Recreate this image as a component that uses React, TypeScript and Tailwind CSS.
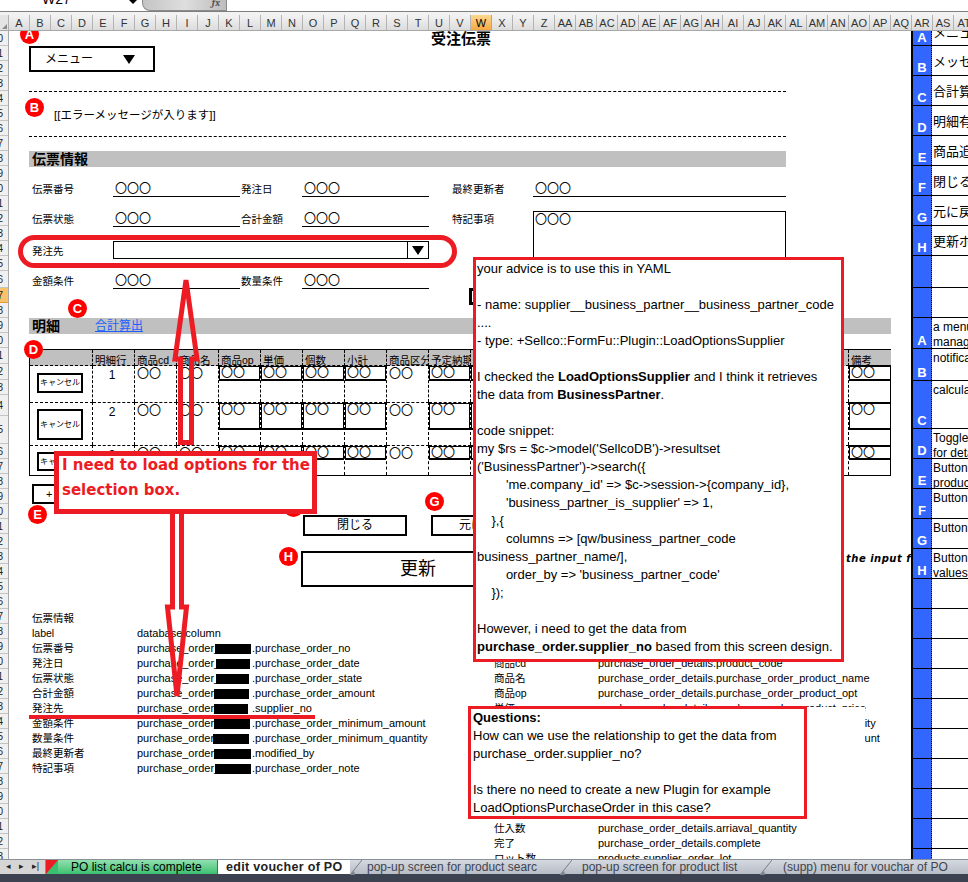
import React from "react";

const COLS = ["A","B","C","D","E","F","G","H","I","J","K","L","M","N","O","P","Q","R","S","T","U","V","W","X","Y","Z","AA","AB","AC","AD","AE","AF","AG","AH","AI","AJ","AK","AL","AM","AN","AO","AP","AQ","AR","AS","AT"];

const GUTTER = [15,15,15,15,15,15,15,15,15,15,15,15,15,15,15,15,17,15,15,15,15,16,16,15,21,28,15,15,15,15,15,15,15,15,15,15,15,15,15,15,15,15,15,15,15,15,15,15,15,15,15,15,15,15,15,15];

const PANEL: { h: number; l?: string; t?: string[]; top?: boolean }[] = [
  { h: 15, l: "A", t: ["メニュー"], top: true },
  { h: 30, l: "B", t: ["メッセージ"] },
  { h: 30, l: "C", t: ["合計算出"] },
  { h: 30, l: "D", t: ["明細有無"] },
  { h: 30, l: "E", t: ["商品追加"] },
  { h: 30, l: "F", t: ["閉じるボタン"] },
  { h: 30, l: "G", t: ["元に戻す"] },
  { h: 30, l: "H", t: ["更新ボタン"] },
  { h: 32 },
  { h: 30 },
  { h: 31, l: "A", t: ["a menu", "management"] },
  { h: 32, l: "B", t: ["notification"] },
  { h: 48, l: "C", t: ["calculate"] },
  { h: 30, l: "D", t: ["Toggle", "for details"] },
  { h: 30, l: "E", t: ["Button", "product"] },
  { h: 30, l: "F", t: ["Button"] },
  { h: 30, l: "G", t: ["Button"] },
  { h: 30, l: "H", t: ["Button", "values"] },
  { h: 30 },{ h: 30 },{ h: 30 },{ h: 30 },{ h: 30 },{ h: 30 },{ h: 30 },{ h: 30 },{ h: 30 },{ h: 30 },
];

const HEADERS = ["","明細行","商品cd","商品名","商品op","単価","個数","小計","商品区分","予定納期","仕入先","仕入数","完了","ロット数","入荷日","入荷数","金額","税区分","摘要","備考"];
const BOXED = [4,5,6,7,9,10,11,12,13,14,15,16,17,19];
const TROWS = [
  { no: "1", box: "h-[16px]", btn: "h-[20px] mt-[7px]" },
  { no: "2", box: "h-[28px]", btn: "h-[31px] mt-[6px]" },
  { no: "3", box: "h-[15px]", btn: "h-[19px] mt-[6px]" },
];

const LEFT: [string, string, string?, number?, number?][] = [
  ["伝票情報",""],
  ["label","database column"],
  ["伝票番号","purchase_order_",".purchase_order_no",215,36],
  ["発注日","purchase_order_",".purchase_order_date",216,34],
  ["伝票状態","purchase_order_",".purchase_order_state",216,33],
  ["合計金額","purchase_order_",".purchase_order_amount",214,35],
  ["発注先","purchase_order_",".supplier_no",214,34],
  ["金額条件","purchase_order_",".purchase_order_minimum_amount",214,36],
  ["数量条件","purchase_order_",".purchase_order_minimum_quantity",213,36],
  ["最終更新者","purchase_order_",".modified_by",214,37],
  ["特記事項","purchase_order_",".purchase_order_note",215,36],
];

const RIGHT = [
  ["明細",""],["label","database column"],["明細行","purchase_order_details.line_no"],
  ["商品cd","purchase_order_details.product_code"],
  ["商品名","purchase_order_details.purchase_order_product_name"],
  ["商品op","purchase_order_details.purchase_order_product_opt"],
  ["単価","purchase_order_details.purchase_order_product_price"],
  ["個数","purchase_order_details.purchase_order_supply_quantity"],
  ["小計","purchase_order_details.purchase_order_ordered_amount"],
  ["",""],["",""],["",""],["",""],["",""],
  ["仕入数","purchase_order_details.arriaval_quantity"],
  ["完了","purchase_order_details.complete"],
  ["ロット数","products.supplier_order_lot"],
];

function Badge({ l, cls }: { l: string; cls: string }) {
  return (
    <div className={`absolute w-[19px] h-[19px] rounded-full bg-[#ff0000] text-white font-bold text-[13px] leading-[19px] text-center ${cls}`}>{l}</div>
  );
}

function Tri() {
  return <span className="block w-0 h-0 border-l-[6px] border-r-[6px] border-t-[9px] border-l-transparent border-r-transparent border-t-black" />;
}

function Label({ text, pad = "pl-[3px]" }: { text: string; pad?: string }) {
  return <div className={`${pad} text-[10.5px] leading-[17px] whitespace-nowrap`}>{text}</div>;
}

function Value({ text }: { text: string }) {
  return <div className="border-b border-black pl-[2px] pt-[1px] text-[12px] leading-[15px] h-[16px]">{text}</div>;
}

function Tab({ w, children, cls = "" }: { w: number; children: React.ReactNode; cls?: string }) {
  return (
    <div style={{ width: w }} className={`shrink-0 h-full flex items-center whitespace-nowrap ${cls}`}>{children}</div>
  );
}

function Slash() {
  return (
    <svg width="12" height="15" className="shrink-0">
      <path d="M0 15 L12 0" stroke="#7a7f88" fill="none" />
      <path d="M0 15 L4 11 L5 15 Z" fill="#7a7f88" />
    </svg>
  );
}

export default function App() {
  return (
    <div className="relative w-[968px] h-[882px] overflow-hidden bg-white flex flex-col text-black [font-family:'Liberation_Sans','Noto_Sans_CJK_JP',sans-serif]">
      {/* formula bar */}
      <div className="h-[12px] shrink-0 flex border-b border-[#7f7f7f] relative overflow-hidden">
        <div className="w-[142px] relative">
          <span className="absolute left-[42px] -top-[9px] text-[14px] leading-[16px]">W27</span>
          <span className="absolute left-[129px] top-0 w-0 h-0 border-l-[4px] border-r-[4px] border-t-[4px] border-l-transparent border-r-transparent border-t-black" />
        </div>
        <div className="w-[85px] h-[11px] bg-gradient-to-r from-[#c4c4c4] via-[#dedede] to-[#bdbdbd] border-x border-b border-[#8a8a8a] rounded-bl-[8px] flex justify-end items-start pr-[6px]">
          <span className="text-[10px] leading-[6px] italic font-bold text-[#555] font-serif">fx</span>
        </div>
      </div>
      <div className="h-[3px] shrink-0 bg-[#f2f2f2]" />
      {/* column headers */}
      <div className="h-[16px] shrink-0 flex overflow-hidden border-b border-[#a8a8a8]">
        <div className="w-[9px] shrink-0 bg-[#e4e4e4] border-r border-[#b0b0b0] relative">
          <span className="absolute right-[1px] bottom-[1px] w-0 h-0 border-l-[5px] border-b-[5px] border-l-transparent border-b-[#8a8a8a]" />
        </div>
        {COLS.map((c) => (
          <div key={c} className={`w-[21px] shrink-0 text-center text-[11px] leading-[16px] border-r ${c === "W" ? "bg-gradient-to-b from-[#fbd98c] to-[#f5a843] border-[#e59c3a]" : "bg-gradient-to-b from-[#f3f3f3] to-[#dcdcdc] border-[#b4b4b4] text-[#333]"}`}>{c}</div>
        ))}
      </div>
      {/* main */}
      <div className="flex-1 min-h-0 flex overflow-hidden">
        <div className="w-[9px] shrink-0 border-r border-[#a8a8a8] overflow-hidden">
          {GUTTER.map((h, i) => (
            <div key={i} style={{ height: h }} className={`flex justify-end items-center border-b text-[10px] overflow-hidden ${i === 17 ? "bg-[#fbc26a] border-[#e59c3a]" : "bg-[#f0f0f0] border-[#c4c4c4]"}`}>
              <span className="mr-[5px] whitespace-nowrap text-[#222]">{i + 10}</span>
            </div>
          ))}
        </div>

        {/* sheet */}
        <div className="relative w-[902px] shrink-0 overflow-hidden pl-[20px]">
          <div className="h-[15px] pl-[402px] text-[15px] font-bold leading-[15px] whitespace-nowrap">受注伝票</div>
          <div className="w-[126px] h-[26px] border-2 border-black flex items-center pl-[14px]">
            <span className="text-[12px] w-[78px]">メニュー</span>
            <Tri />
          </div>
          <div className="w-[757px] mt-[19px] border-t border-dashed border-black" />
          <div className="h-[44px] pl-[25px] pt-[14px] text-[11.5px] leading-[18px]">[[エラーメッセージが入ります]]</div>
          <div className="w-[757px] border-t border-dashed border-black" />

          <div className="w-[757px] h-[16px] mt-[14px] bg-[#c0c0c0] pl-[3px] text-[14px] font-bold leading-[16px]">伝票情報</div>

          <div className="w-[757px] mt-[14px] grid grid-cols-[84px_127px_62px_127px_23px_81px_253px] grid-rows-[16px_16px_18px_16px] gap-y-[14px]">
            <Label text="伝票番号" />
            <Value text="〇〇〇" />
            <Label text="発注日" pad="pl-[1px]" />
            <Value text="〇〇〇" />
            <div />
            <Label text="最終更新者" pad="" />
            <Value text="〇〇〇" />

            <Label text="伝票状態" />
            <Value text="〇〇〇" />
            <Label text="合計金額" pad="pl-[1px]" />
            <Value text="〇〇〇" />
            <div />
            <Label text="特記事項" pad="" />
            <div className="row-span-3 border border-black text-[12px] leading-[15px] pl-[1px] pt-[1px] h-[90px]">〇〇〇</div>

            <Label text="発注先" pad="pl-[3px] pt-[2px]" />
            <div className="col-span-3 border border-black flex justify-end">
              <div className="w-[21px] border-l border-black flex items-center justify-center"><Tri /></div>
            </div>
            <div className="col-span-2" />

            <Label text="金額条件" />
            <Value text="〇〇〇" />
            <Label text="数量条件" pad="pl-[1px]" />
            <Value text="〇〇〇" />
          </div>
          <div className="absolute left-[460px] top-[257px] w-[120px] h-[17px] border-[3px] border-black" />

          <div className="w-[862px] h-[16px] mt-[29px] bg-[#c0c0c0] flex pl-[3px] text-[14px] font-bold leading-[16px]">
            <span className="w-[63px]">明細</span>
            <a className="text-[12px] font-normal text-[#2060ff] underline">合計算出</a>
          </div>

          {/* detail table */}
          <div className="w-[862px] mt-[15px] border border-black grid grid-cols-[63px_repeat(19,42px)] grid-rows-[16px_36px_43px_30px]">
            {HEADERS.map((h, i) => (
              <div key={i} className={`bg-[#c0c0c0] text-[10.5px] leading-[20px] pl-[2px] whitespace-nowrap overflow-hidden border-b border-black ${i < 19 ? "border-r border-dashed border-black" : ""}`}>{h}</div>
            ))}
            {TROWS.map((r, ri) =>
              HEADERS.map((_, ci) => (
                <div key={`${ri}-${ci}`} className={`relative overflow-hidden ${ri > 0 ? "border-t border-black" : ""} ${ci < 19 ? "border-r border-dashed border-black" : ""}`}>
                  {ci === 0 ? (
                    <div className={`ml-[7px] w-[46px] border-2 border-black flex items-center justify-center text-[8px] whitespace-nowrap ${r.btn}`}>キャンセル</div>
                  ) : ci === 1 ? (
                    <div className="text-center text-[12px] leading-[14px] pt-[2px] pr-[3px]">{r.no}</div>
                  ) : BOXED.includes(ci) ? (
                    <div className={`border-[2px] border-black text-[12px] leading-[12px] -mt-[1px] -mx-[1px] pl-[1px] ${r.box}`}>〇〇</div>
                  ) : (
                    <div className="text-[12px] leading-[14px] pl-[2px] pt-[1px]">〇〇</div>
                  )}
                </div>
              ))
            )}
          </div>

          <div className="w-[60px] h-[20px] mt-[8px] ml-[3px] border-2 border-black text-[11px] leading-[17px] pl-[12px] whitespace-nowrap overflow-hidden">+ 商品追加</div>

          <div className="flex gap-[24px] pl-[274px] mt-[11px]">
            <div className="w-[104px] h-[21px] border-2 border-black text-center text-[12px] leading-[17px]">閉じる</div>
            <div className="w-[104px] h-[21px] border-2 border-black text-center text-[12px] leading-[17px]">元に戻す</div>
          </div>

          <div className="flex items-center pl-[272px] mt-[15px]">
            <div className="w-[234px] shrink-0 h-[36px] border-2 border-black text-center text-[18px] leading-[32px]">更新</div>
            <div className="ml-[311px] shrink-0 -mt-[22px] text-[10px] font-bold italic whitespace-nowrap tracking-[0.5px] [font-family:'DejaVu_Sans',sans-serif]">the input field</div>
          </div>

          {/* mapping */}
          <div className="mt-[24px] text-[11px] leading-[15px]">
            {LEFT.map((row, i) => {
              const r = RIGHT[i];
              return (
                <div key={i} className="grid grid-cols-[105px_357px_104px_1fr] h-[15px] pl-[3px] whitespace-nowrap">
                  <div className="text-[10.5px]">{row[0]}</div>
                  <div className="relative">
                    {row[1]}
                    {row[2] && (
                      <>
                        <span className="absolute left-[115px] top-0">{row[2]}</span>
                        <span style={{ left: (row[3] as number) - 137, width: row[4] as number }} className="absolute top-[3px] h-[10px] bg-black" />
                      </>
                    )}
                  </div>
                  <div className="text-[10.5px]">{r[0]}</div>
                  <div>{r[1]}</div>
                </div>
              );
            })}
            {RIGHT.slice(LEFT.length).map((r, i) => (
              <div key={i} className="grid grid-cols-[105px_357px_104px_1fr] h-[15px] pl-[3px] whitespace-nowrap">
                <div />
                <div />
                <div className="text-[10.5px]">{r[0]}</div>
                <div>{r[1]}</div>
              </div>
            ))}
          </div>
        </div>

        {/* right notes panel */}
        <div className="flex-1 min-w-0 border-l-2 border-black overflow-hidden">
          {PANEL.map((p, i) => (
            <div key={i} style={{ height: p.h }} className="flex border-b border-black overflow-hidden">
              <div className="w-[19px] shrink-0 bg-[#3366ff] text-white font-bold text-[13px] flex items-end justify-center leading-[14px] border-r border-dotted border-black">{p.l}</div>
              <div className={`flex-1 min-w-0 whitespace-nowrap overflow-hidden pl-[1px] leading-[15px] ${p.h === 30 && i < 8 ? "pt-[8px] text-[13px]" : p.top ? "-mt-[6px] text-[13px]" : "text-[12px] pt-[2px]"}`}>
                {p.t?.map((t) => <div key={t}>{t}</div>)}
              </div>
            </div>
          ))}
        </div>
      </div>

      {/* sheet tabs */}
      <div className="h-[15px] shrink-0 flex items-stretch border-t border-[#8a8f98] bg-gradient-to-b from-[#d5d9e0] to-[#b7bcc6] text-[12px] text-[#3f4450] relative">
        <div className="w-[46px] shrink-0 flex items-center justify-around px-[2px] text-[#222] text-[9px] bg-[#d5d5d5] border-r border-[#8a8f98]">
          <span>◂</span><span>▸</span><span>▸|</span>
        </div>
        <div className="w-[12px] shrink-0 bg-[#38c070]">
          <div className="w-full h-full bg-[#ed1c24] [clip-path:polygon(0_0,100%_0,0_100%)]" />
        </div>
        <Tab w={160} cls="pl-[13px] text-black bg-gradient-to-b from-[#8fe0ae] to-[#38c070] border-r border-[#5a5f68]">PO list calcu is complete</Tab>
        <Tab w={132} cls="pl-[8px] bg-white font-bold text-[#222] text-[12.5px] tracking-[0.3px]">edit voucher of PO</Tab>
        <Slash />
        <Tab w={198} cls="pl-[5px]">pop-up screen for product searc</Tab>
        <Slash />
        <Tab w={188} cls="pl-[10px]">pop-up screen for product list</Tab>
        <Slash />
        <Tab w={196} cls="pl-[11px]">(supp) menu for vouchar of PO</Tab>
      </div>
      <div className="h-[8px] shrink-0 bg-[#3c4250]" />

      {/* annotations */}
      <div className="absolute left-[807px] top-[707px] w-[58px] h-[39px] bg-white" />
      <Badge l="A" cls="left-[20px] top-[25px] [clip-path:inset(6px_0_0_0)]" />
      <Badge l="B" cls="left-[25px] top-[98px]" />
      <Badge l="C" cls="left-[68px] top-[299px]" />
      <Badge l="D" cls="left-[24px] top-[340px]" />
      <Badge l="E" cls="left-[28px] top-[505px]" />
      <Badge l="F" cls="left-[284px] top-[498px]" />
      <Badge l="G" cls="left-[425px] top-[492px]" />
      <Badge l="H" cls="left-[279px] top-[547px]" />

      <div className="absolute left-[18px] top-[235px] w-[439px] h-[33px] rounded-[17px] border-[5px] border-[#ed1c24]" />

      <svg className="absolute left-0 top-0 pointer-events-none" width="968" height="882">
        <g fill="none" stroke="#ed1c24" strokeWidth="5">
          <path d="M186 280 L175 359 L180.5 359 L180.5 442.5 L191.5 442.5 L191.5 359 L197 359 Z" />
          <path d="M172.5 514 L172.5 607 L167.5 607 L177 696 L186.5 607 L181.5 607 L181.5 514" />
        </g>
        <rect x="29" y="715" width="286" height="4" fill="#ed1c24" />
      </svg>

      <div className="absolute left-[54px] top-[451px] w-[263px] h-[63px] overflow-hidden bg-white border-[5px] border-[#ed1c24] text-[#ed1c24] font-bold text-[15px] leading-[25px] pl-[3px] [font-family:'DejaVu_Sans',sans-serif] whitespace-nowrap">
        <div className="-mt-[3px]">I need to load options for the<br />selection box.</div>
      </div>

      <div className="absolute left-[473px] top-[257px] w-[371px] h-[405px] bg-white border-[3px] border-[#ed1c24] text-[13px] leading-[18px] pl-[1px] whitespace-pre">
{`your advice is to use this in YAML

- name: supplier__business_partner__business_partner_code
....
- type: +Sellco::FormFu::Plugin::LoadOptionsSupplier

I checked the `}<b>LoadOptionsSupplier</b>{` and I think it retrieves
the data from `}<b>BusinessPartner</b>{`.

code snippet:
my $rs = $c->model('SellcoDB')->resultset
('BusinessPartner')->search({
        'me.company_id' => $c->session->{company_id},
        'business_partner_is_supplier' => 1,
    },{
        columns => [qw/business_partner_code
business_partner_name/],
        order_by => 'business_partner_code'
    });

However, i need to get the data from
`}<b>purchase_order.supplier_no</b>{` based from this screen design.`}
      </div>

      <div className="absolute left-[468px] top-[706px] w-[339px] h-[113px] bg-white border-[3px] border-[#ed1c24] text-[13px] leading-[18px] pl-[2px] whitespace-pre">
{``}<b>Questions:</b>{`
How can we use the relationship to get the data from
purchase_order.supplier_no?

Is there no need to create a new Plugin for example
LoadOptionsPurchaseOrder in this case?`}
      </div>
    </div>
  );
}
